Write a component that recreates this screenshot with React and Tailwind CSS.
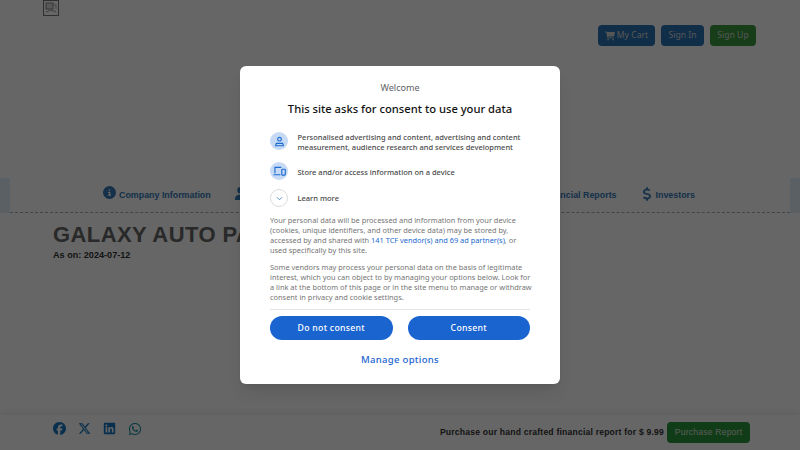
import React from 'react';
import { FaFacebook, FaXTwitter, FaLinkedin, FaWhatsapp, FaCartShopping, FaCircleInfo, FaUser, FaDollarSign } from 'react-icons/fa6';

function BrokenImage() {
  return (
    <svg width="16" height="16" viewBox="0 0 16 16" className="block">
      <rect x="0.5" y="0.5" width="15" height="15" fill="#fff" stroke="#777" />
      <rect x="3" y="3" width="7" height="6" fill="#ddd" stroke="#888" />
      <path d="M3 12 L8 10 L13 12" fill="none" stroke="#999" />
      <path d="M10 5 L13 5 L13 9" fill="none" stroke="#aaa" />
    </svg>
  );
}

function PersonIcon() {
  return (
    <svg width="11" height="11" viewBox="0 0 12 12" fill="none" stroke="#1a6ad0" strokeWidth="1.2">
      <circle cx="6" cy="3.5" r="2" />
      <path d="M2.5 8 H9.5 L10.2 10.6 H1.8 Z" />
    </svg>
  );
}

function DeviceIcon() {
  return (
    <svg width="13" height="11" viewBox="0 0 14 12" fill="none" stroke="#1a6ad0" strokeWidth="1.2">
      <path d="M9 1.5 H2 V8 M0.5 9.5 H8" />
      <rect x="9.5" y="3.5" width="3.8" height="6.5" rx="0.6" />
    </svg>
  );
}

function ConsentModal() {
  return (
    <div className="absolute inset-0 bg-black/60 flex items-center justify-center">
      <div className="w-80 h-[318px] bg-white rounded-md px-[30px] pt-[15px] text-[#4a4a4a] shadow-lg font-['Noto_Sans',sans-serif]">
        <p className="text-center text-[9.1px] leading-[14px] text-[#5f6368]">Welcome</p>
        <h1 className="text-center text-[11.2px] leading-[18px] font-medium text-[#111] mt-[5px]">This site asks for consent to use your data</h1>

        <div className="mt-[14px] flex items-center gap-[9.5px]">
          <div className="w-[18px] h-[18px] mb-[2px] rounded-full bg-[#c6daf5] flex items-center justify-center shrink-0"><PersonIcon /></div>
          <p className="text-[7.5px] leading-[10px] font-medium">Personalised advertising and content, advertising and content measurement, audience research and services development</p>
        </div>
        <div className="mt-[11px] h-[18px] flex items-center gap-[9.5px]">
          <div className="w-[18px] h-[18px] mb-[2px] rounded-full bg-[#c6daf5] flex items-center justify-center shrink-0"><DeviceIcon /></div>
          <p className="text-[7.5px] leading-[10px] font-medium">Store and/or access information on a device</p>
        </div>
        <div className="mt-[8px] flex items-center gap-[9.5px]">
          <div className="w-[18px] h-[18px] rounded-full border border-[#ddd] flex items-center justify-center shrink-0">
            <svg width="7" height="5" viewBox="0 0 8 6" fill="none" stroke="#3b7bc9" strokeWidth="1"><path d="M1 1.5 L4 4.5 L7 1.5" /></svg>
          </div>
          <p className="text-[7.5px] leading-[10px] font-medium">Learn more</p>
        </div>

        <p className="mt-[8px] text-[7.4px] leading-[10px] text-[#757575]">Your personal data will be processed and information from your device (cookies, unique identifiers, and other device data) may be stored by, accessed by and shared with <span className="text-[#1a6ad0]">141 TCF vendor(s) and 69 ad partner(s)</span>, or used specifically by this site.</p>
        <p className="mt-[7px] -mr-[3px] text-[7.4px] leading-[10px] text-[#757575]">Some vendors may process your personal data on the basis of legitimate interest, which you can object to by managing your options below. Look for a link at the bottom of this page or in the site menu to manage or withdraw consent in privacy and cookie settings.</p>

        <div className="mt-[7px] border-t border-[#e4e4e4] pt-[6px] flex gap-[15px]">
          <button className="flex-1 h-6 pt-[2px] rounded-full bg-[#1a64d0] text-white text-[8.7px] font-medium tracking-[0.3px]">Do not consent</button>
          <button className="flex-1 h-6 pt-[2px] rounded-full bg-[#1a64d0] text-white text-[8.7px] font-medium tracking-[0.3px]">Consent</button>
        </div>
        <p className="mt-[13px] text-center text-[9.5px] leading-[14px] font-medium tracking-[0.3px] text-[#1a64d0]">Manage options</p>
      </div>
    </div>
  );
}

export default function App() {
  return (
    <div className="relative h-screen overflow-hidden bg-white flex flex-col font-['Liberation_Sans',sans-serif]">
      <header className="h-[178px] shrink-0 pl-[43px] pr-11 flex justify-between items-start">
        <BrokenImage />
        <div className="mt-[25px] flex gap-[6px] text-[8.6px] font-['Noto_Sans',sans-serif] text-[#d8d8d8]">
          <button className="h-[21px] w-[57px] rounded-sm bg-[#2a73b5] flex items-center justify-center gap-[2px]"><FaCartShopping size={10} />My Cart</button>
          <button className="h-[21px] w-[43px] rounded-sm bg-[#2a73b5]">Sign In</button>
          <button className="h-[21px] w-[46px] rounded-sm bg-[#3b9a3f]">Sign Up</button>
        </div>
      </header>

      <nav className="h-[35px] shrink-0 bg-[#e0f0fa] flex">
        <div className="w-[10px]" />
        <div className="flex-1 bg-white border-b border-dashed border-[#aaa] pl-[93px] pr-[95px] flex items-center gap-[23px] text-[8.9px] font-bold text-[#337ab7]">
          <a className="flex items-center gap-[3px]"><FaCircleInfo size={13} className="mb-[5px]" /><span className="mt-[2px]">Company Information</span></a>
          <FaUser size={13} className="mb-[3px]" />
          <a className="ml-auto mt-[2px]">Financial Reports</a>
          <a className="flex items-center gap-[2px]"><FaDollarSign size={14} className="mb-[3px]" /><span className="mt-[2px]">Investors</span></a>
        </div>
        <div className="w-[10px]" />
      </nav>

      <main className="flex-1 pl-[53px] pt-[9px] text-[#333]">
        <h2 className="text-[22px] leading-[26px] font-bold tracking-[0.4px] text-[#666]">GALAXY AUTO PARTS</h2>
        <p className="mt-[1px] text-[9.1px] leading-[12px] font-bold">As on: 2024-07-12</p>
      </main>

      <footer className="h-[35px] shrink-0 shadow-[0_-2px_6px_rgba(0,0,0,0.08)] pl-[53px] pr-[50px] flex items-center justify-between">
        <div className="flex items-center gap-[12px] mb-[8px] text-[#1877c2]">
          <FaFacebook size={13} />
          <FaXTwitter size={13} />
          <FaLinkedin size={13} />
          <FaWhatsapp size={14} className="text-[#128c9e]" />
        </div>
        <div className="flex items-center gap-[3px]">
          <span className="text-[8.6px] font-bold tracking-[0.2px] text-[#333]">Purchase our hand crafted financial report for $ 9.99</span>
          <button className="h-[21px] w-[83px] rounded-sm bg-[#2a9a3a] text-[#e0e0e0] text-[8.6px] tracking-[0.2px]">Purchase Report</button>
        </div>
      </footer>

      <ConsentModal />
    </div>
  );
}
